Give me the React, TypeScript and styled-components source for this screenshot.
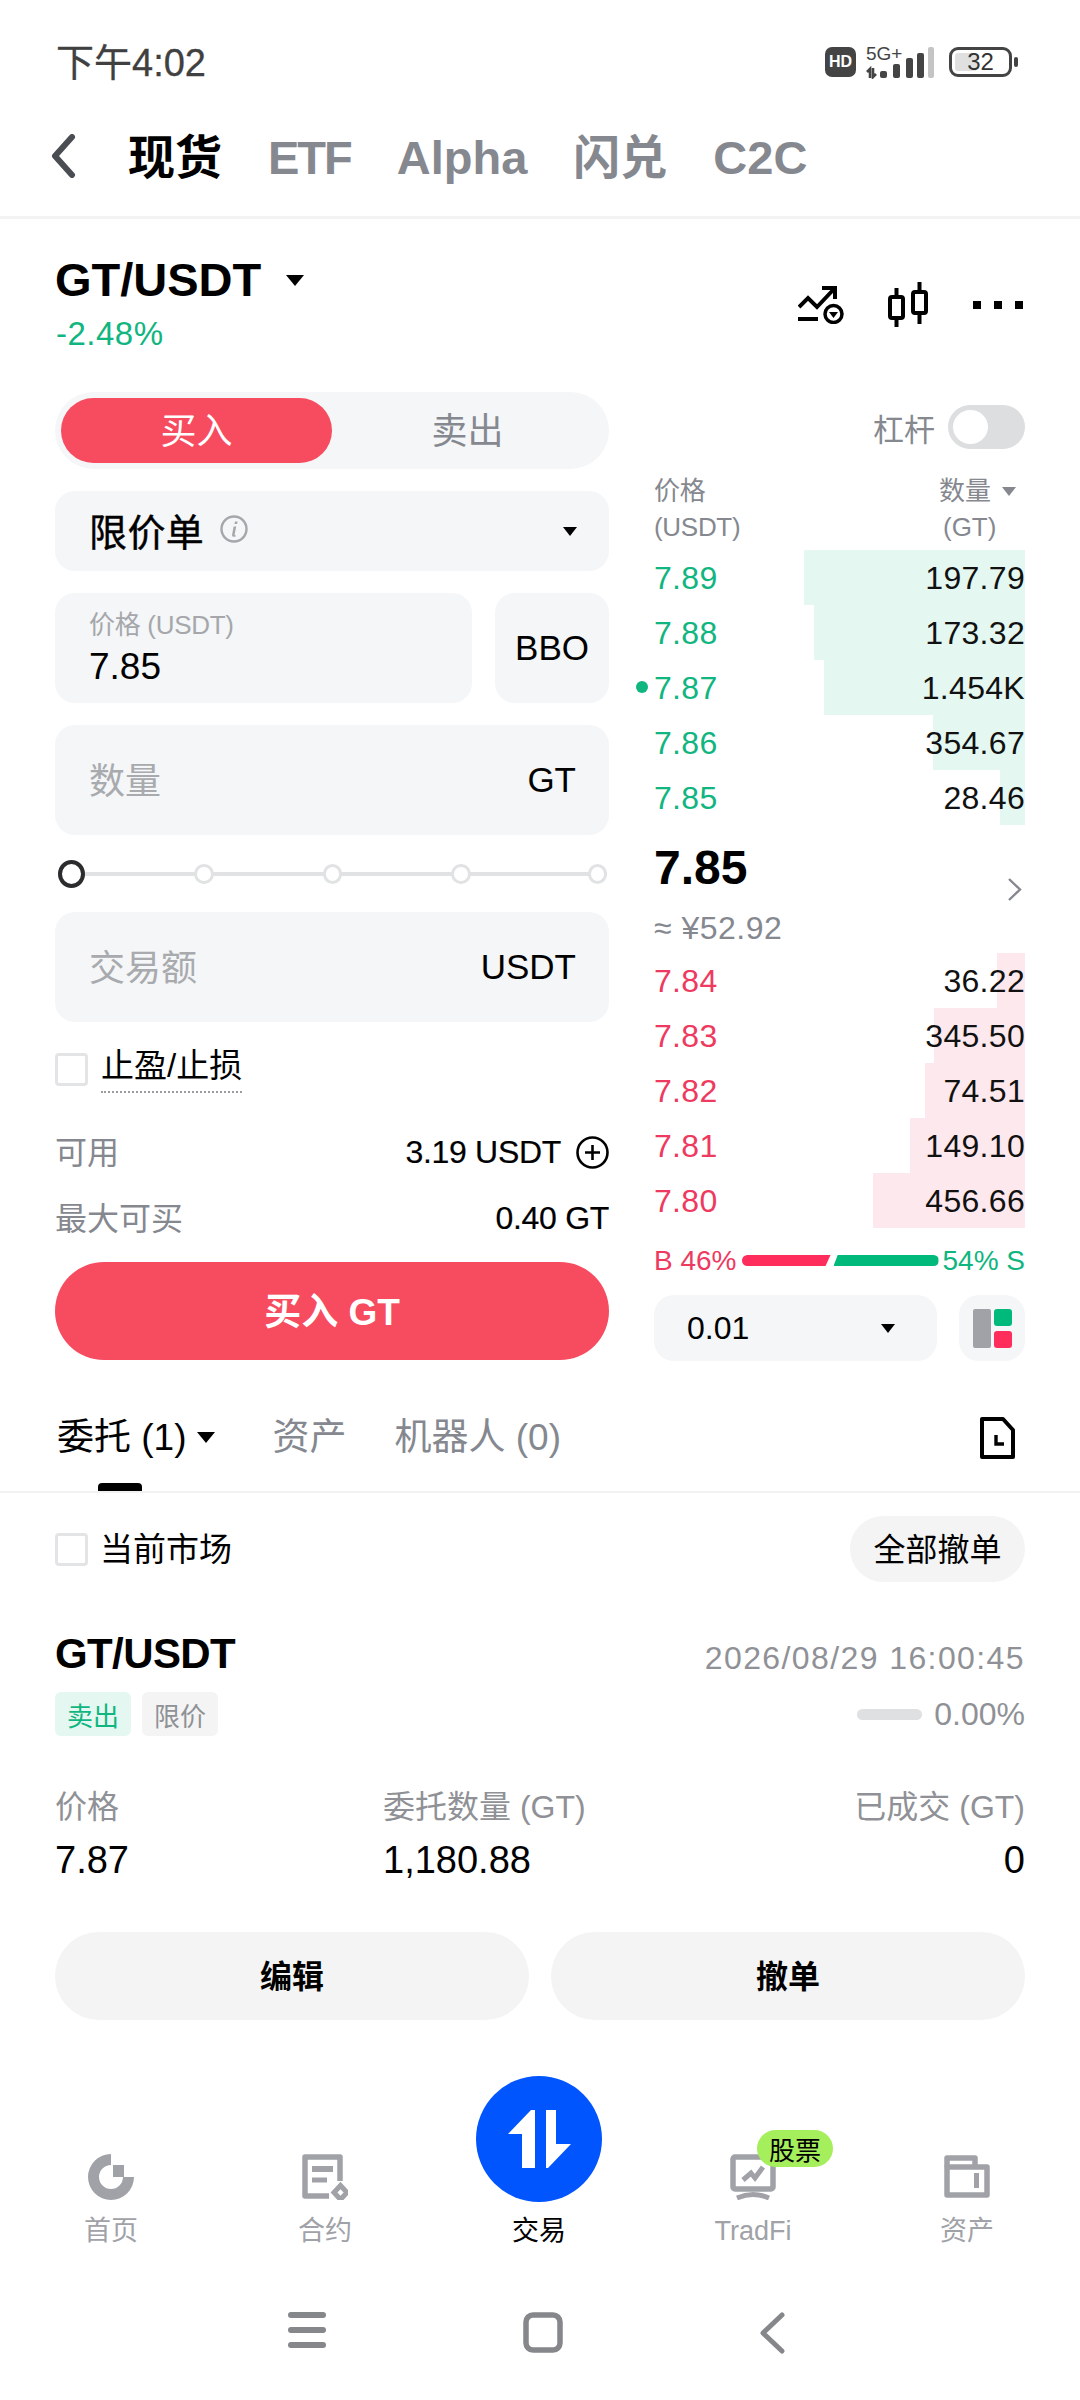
import styled, { createGlobalStyle } from "styled-components";

const GlobalStyle = createGlobalStyle`
  * { box-sizing: border-box; }
  html, body { margin: 0; padding: 0; background: #ffffff; }
  body {
    font-family: "Liberation Sans", "Noto Sans CJK SC", sans-serif;
    color: #000000;
  }
`;

const GREEN = "#10b57f";
const RED = "#ee3a5f";
const GRAY = "#85888f";
const FIELD = "#f4f6f8";

const asks = [
  { price: "7.89", size: "197.79", depth: 221, dot: false },
  { price: "7.88", size: "173.32", depth: 211, dot: false },
  { price: "7.87", size: "1.454K", depth: 201, dot: true },
  { price: "7.86", size: "354.67", depth: 92, dot: false },
  { price: "7.85", size: "28.46", depth: 25, dot: false },
];

const bids = [
  { price: "7.84", size: "36.22", depth: 28 },
  { price: "7.83", size: "345.50", depth: 91 },
  { price: "7.82", size: "74.51", depth: 100 },
  { price: "7.81", size: "149.10", depth: 115 },
  { price: "7.80", size: "456.66", depth: 152 },
];

export default function App() {
  return (
    <Screen>
      <GlobalStyle />
      <StatusBar>
        <Clock>下午4:02</Clock>
        <StatusIcons>
          <HdBadge>HD</HdBadge>
          <NetworkBlock>
            <NetworkLabel>5G+</NetworkLabel>
            <svg width="70" height="32" viewBox="0 0 70 32">
              <path d="M4 31V22L1 25M7 21V30L10 27" fill="none" stroke="#444" strokeWidth="2.6" />
              <rect x="14" y="24" width="7" height="7" rx="2" fill="#444" />
              <rect x="27" y="17" width="7" height="14" rx="2" fill="#444" />
              <rect x="40" y="11" width="7" height="20" rx="2" fill="#444" />
              <rect x="51" y="6" width="7" height="25" rx="2" fill="#444" />
              <rect x="62" y="0" width="6" height="31" rx="2" fill="#c4c4c4" />
            </svg>
          </NetworkBlock>
          <Battery>
            <BatteryFill />
            <BatteryLevel>32</BatteryLevel>
          </Battery>
          <BatteryNub />
        </StatusIcons>
      </StatusBar>

      <TopTabs>
        <BackChevron width="26" height="44" viewBox="0 0 26 44">
          <path d="M22 3L5 22L22 41" fill="none" stroke="#4a4d52" strokeWidth="6" strokeLinecap="round" strokeLinejoin="round" />
        </BackChevron>
        <TopTab $active>现货</TopTab>
        <TopTab $tight>ETF</TopTab>
        <TopTab>Alpha</TopTab>
        <TopTab>闪兑</TopTab>
        <TopTab>C2C</TopTab>
      </TopTabs>

      <MarketHeader>
        <div>
          <PairRow>
            <PairName>GT/USDT</PairName>
            <Triangle $size={9} $color="#000" />
          </PairRow>
          <Change>-2.48%</Change>
        </div>
        <HeaderIcons>
          <svg width="46" height="38" viewBox="0 0 46 38" fill="none" stroke="#000">
            <path d="M1 21L10 12L19 21L36 3" strokeWidth="4" />
            <path d="M24 2H37V13" strokeWidth="4" />
            <path d="M0 33H20" strokeWidth="4" />
            <circle cx="35.5" cy="28" r="8.5" strokeWidth="3.5" />
            <path d="M31 26H40L35.5 32Z" fill="#000" stroke="none" />
          </svg>
          <svg width="40" height="45" viewBox="0 0 40 45" fill="none" stroke="#000" strokeWidth="4">
            <rect x="2" y="15" width="13" height="21" rx="2" />
            <path d="M8.5 6V15M8.5 36V45" />
            <rect x="25" y="10" width="13" height="21" rx="2" />
            <path d="M31.5 0V10M31.5 31V42" />
          </svg>
          <MoreDots>
            <Dot />
            <Dot />
            <Dot />
          </MoreDots>
        </HeaderIcons>
      </MarketHeader>

      <TradeArea>
        <OrderForm>
          <SideToggle>
            <SideOption $active>买入</SideOption>
            <SideOption>卖出</SideOption>
          </SideToggle>

          <OrderType>
            <OrderTypeLabel>
              限价单
              <svg width="28" height="28" viewBox="0 0 28 28">
                <circle cx="14" cy="14" r="12.5" fill="none" stroke="#a5a7ab" strokeWidth="2.4" />
                <path d="M15 6.5h2.6l-.5 2.6h-2.6zM13.6 11.5h2.6l-1.6 8.2c-.1.6.3.8 1.2.6l-.2 1.3c-2.2.6-3.8.2-3.5-1.8z" fill="#a5a7ab" />
              </svg>
            </OrderTypeLabel>
            <Triangle $size={7.5} $color="#000" />
          </OrderType>

          <PriceRow>
            <PriceField>
              <PriceLabel>价格 (USDT)</PriceLabel>
              <PriceValue>7.85</PriceValue>
            </PriceField>
            <BboButton>BBO</BboButton>
          </PriceRow>

          <InputField>
            <Placeholder>数量</Placeholder>
            <Unit>GT</Unit>
          </InputField>

          <Slider>
            <SliderStop $active />
            <SliderStop />
            <SliderStop />
            <SliderStop />
            <SliderStop $last />
          </Slider>

          <InputField $flush>
            <Placeholder>交易额</Placeholder>
            <Unit>USDT</Unit>
          </InputField>

          <StopRow>
            <CheckBox />
            <DottedLabel>止盈/止损</DottedLabel>
          </StopRow>

          <InfoRow>
            <InfoLabel>可用</InfoLabel>
            <InfoValue>
              3.19 USDT
              <svg width="33" height="33" viewBox="0 0 33 33" fill="none" stroke="#000" strokeWidth="2.6">
                <circle cx="16.5" cy="16.5" r="15" />
                <path d="M16.5 9V24M9 16.5H24" />
              </svg>
            </InfoValue>
          </InfoRow>
          <InfoRow>
            <InfoLabel>最大可买</InfoLabel>
            <InfoValue>0.40 GT</InfoValue>
          </InfoRow>

          <BuyButton>买入 GT</BuyButton>
        </OrderForm>

        <OrderBook>
          <LeverageRow>
            <LeverageLabel>杠杆</LeverageLabel>
            <Switch>
              <SwitchKnob />
            </Switch>
          </LeverageRow>

          <BookHeader>
            <BookHeadLeft>
              <span>价格</span>
              <span>(USDT)</span>
            </BookHeadLeft>
            <BookHeadRight>
              <QtyTitle>
                数量
                <Triangle $size={7.5} $color={GRAY} />
              </QtyTitle>
              <QtyUnit>(GT)</QtyUnit>
            </BookHeadRight>
          </BookHeader>

          <div>
            {asks.map((row) => (
              <BookRow key={row.price}>
                <DepthBar $color="#e4f8f1" style={{ width: row.depth }} />
                {row.dot && <OwnOrderDot />}
                <BookPrice $color={GREEN}>{row.price}</BookPrice>
                <BookSize>{row.size}</BookSize>
              </BookRow>
            ))}
          </div>

          <LastPriceBlock>
            <LastPrice>7.85</LastPrice>
            <FiatRow>
              <FiatPrice>≈ ¥52.92</FiatPrice>
              <LastChevron width="15" height="25" viewBox="0 0 15 25">
                <path d="M2 2L13 12.5L2 23" fill="none" stroke="#85888f" strokeWidth="2.4" />
              </LastChevron>
            </FiatRow>
          </LastPriceBlock>

          <div>
            {bids.map((row) => (
              <BookRow key={row.price}>
                <DepthBar $color="#fde9ed" style={{ width: row.depth }} />
                <BookPrice $color={RED}>{row.price}</BookPrice>
                <BookSize>{row.size}</BookSize>
              </BookRow>
            ))}
          </div>

          <RatioRow>
            <RatioText $color={RED}>B 46%</RatioText>
            <RatioBar $color="#ff2d5b" $side="left" />
            <RatioBar $color="#00b97a" $side="right" />
            <RatioText $color={GREEN}>54% S</RatioText>
          </RatioRow>

          <BookControls>
            <PrecisionSelect>
              <span>0.01</span>
              <Triangle $size={7.5} $color="#000" />
            </PrecisionSelect>
            <LayoutButton>
              <svg width="39" height="39" viewBox="0 0 39 39">
                <rect x="0" y="0" width="18" height="39" rx="2" fill="#a0a2a7" />
                <rect x="21" y="0" width="18" height="17" rx="3" fill="#00b97a" />
                <rect x="21" y="22" width="18" height="17" rx="3" fill="#ff2d5b" />
              </svg>
            </LayoutButton>
          </BookControls>
        </OrderBook>
      </TradeArea>

      <OrderTabs>
        <OrderTab $active>
          委托 (1)
          <Triangle $size={9} $color="#000" />
          <TabUnderline />
        </OrderTab>
        <OrderTab>资产</OrderTab>
        <OrderTab>机器人 (0)</OrderTab>
        <HistoryIcon width="35" height="42" viewBox="0 0 35 42" fill="none" stroke="#000" strokeWidth="4">
          <path d="M2 2H23L33 13V40H2Z" strokeLinejoin="round" />
          <path d="M16 18V27H24" strokeWidth="3.4" />
        </HistoryIcon>
      </OrderTabs>

      <FilterRow>
        <FilterLabel>
          <CheckBox />
          <FilterText>当前市场</FilterText>
        </FilterLabel>
        <CancelAll>全部撤单</CancelAll>
      </FilterRow>

      <OrderCard>
        <OrderTop>
          <OrderPair>GT/USDT</OrderPair>
          <OrderTime>2026/08/29 16:00:45</OrderTime>
        </OrderTop>
        <OrderMeta>
          <Tags>
            <Tag $bg="#e4f8f1" $color={GREEN}>卖出</Tag>
            <Tag $bg="#f4f4f4" $color="#8f9196">限价</Tag>
          </Tags>
          <Progress>
            <ProgressBar />
            0.00%
          </Progress>
        </OrderMeta>
        <OrderStats>
          <StatColumn>
            <StatLabel>价格</StatLabel>
            <StatValue>7.87</StatValue>
          </StatColumn>
          <StatColumn>
            <StatLabel>委托数量 (GT)</StatLabel>
            <StatValue>1,180.88</StatValue>
          </StatColumn>
          <StatColumn $right>
            <StatLabel>已成交 (GT)</StatLabel>
            <StatValue>0</StatValue>
          </StatColumn>
        </OrderStats>
        <OrderActions>
          <ActionButton>编辑</ActionButton>
          <ActionButton>撤单</ActionButton>
        </OrderActions>
      </OrderCard>

      <BottomNav>
        <NavItem>
          <svg width="46" height="46" viewBox="0 0 46 46" fill="#a0a2a7">
            <path d="M23 0A23 23 0 1 0 46 23H35A12 12 0 1 1 23 11Z" />
            <rect x="25" y="11" width="11" height="12" />
          </svg>
          <NavLabel>首页</NavLabel>
        </NavItem>
        <NavItem>
          <svg width="46" height="46" viewBox="0 0 46 46" fill="none" stroke="#a0a2a7">
            <path d="M38 27V3H3V42H27" strokeWidth="5.5" strokeLinejoin="round" />
            <path d="M10 15H31" strokeWidth="6" />
            <path d="M10 26H25" strokeWidth="5" />
            <path d="M38.5 31.5L45 38.5L38.5 45.5L32 38.5Z" strokeWidth="5" />
          </svg>
          <NavLabel>合约</NavLabel>
        </NavItem>
        <NavItem>
          <TradeCircle>
            <svg width="64" height="58" viewBox="0 0 64 58" fill="#ffffff">
              <path d="M24 0H28V58H15V24H1Z" strokeLinejoin="round" />
              <path d="M39 0H49V34H64L41 58H39Z" />
            </svg>
          </TradeCircle>
          <NavLabel $active>交易</NavLabel>
        </NavItem>
        <NavItem>
          <NavIconWrap>
            <svg width="46" height="46" viewBox="0 0 46 46" fill="none" stroke="#a0a2a7">
              <rect x="3" y="3" width="40" height="32" rx="2" strokeWidth="5.5" />
              <path d="M13 26L21 19L25 24L33 13" strokeWidth="5" />
              <path d="M7 44Q23 37 39 44" strokeWidth="5" />
            </svg>
            <StockBadge>股票</StockBadge>
          </NavIconWrap>
          <NavLabel>TradFi</NavLabel>
        </NavItem>
        <NavItem>
          <svg width="46" height="46" viewBox="0 0 46 46" fill="none" stroke="#a0a2a7" strokeWidth="5.5">
            <path d="M3 13H43V41H3Z" strokeLinejoin="round" />
            <path d="M3 13V4H31V13" strokeLinejoin="round" />
            <rect x="30" y="19" width="5" height="15" fill="#a0a2a7" stroke="none" />
          </svg>
          <NavLabel>资产</NavLabel>
        </NavItem>
      </BottomNav>

      <SystemBar>
        <svg width="38" height="36" viewBox="0 0 38 36" fill="#85878b">
          <rect x="0" y="0" width="38" height="6" rx="3" />
          <rect x="0" y="15" width="38" height="6" rx="3" />
          <rect x="0" y="30" width="38" height="6" rx="3" />
        </svg>
        <svg width="40" height="41" viewBox="0 0 40 41">
          <rect x="3" y="3" width="34" height="35" rx="7" fill="none" stroke="#85878b" strokeWidth="5.5" />
        </svg>
        <svg width="26" height="42" viewBox="0 0 26 42">
          <path d="M23 3L4 21L23 39" fill="none" stroke="#85878b" strokeWidth="5" strokeLinecap="round" strokeLinejoin="round" />
        </svg>
      </SystemBar>
    </Screen>
  );
}

const Screen = styled.div`
  width: 1080px;
  height: 2400px;
  background: #ffffff;
  overflow: hidden;
  display: flex;
  flex-direction: column;
`;

const StatusBar = styled.div`
  height: 110px;
  padding: 16px 62px 0 56px;
  display: flex;
  align-items: center;
  justify-content: space-between;
  flex-shrink: 0;
`;

const Clock = styled.span`
  font-size: 38px;
  line-height: 44px;
  color: #404040;
  -webkit-text-stroke: 0.3px #404040;
`;

const StatusIcons = styled.div`
  display: flex;
  align-items: center;
  margin-top: -2px;
`;

const HdBadge = styled.div`
  width: 31px;
  height: 30px;
  border-radius: 7px;
  background: #444444;
  color: #ffffff;
  font-size: 16px;
  font-weight: 700;
  display: flex;
  align-items: center;
  justify-content: center;
`;

const NetworkBlock = styled.div`
  width: 70px;
  height: 31px;
  margin-left: 10px;
  position: relative;
  & svg {
    display: block;
  }
`;

const NetworkLabel = styled.span`
  position: absolute;
  left: 0;
  top: -3px;
  font-size: 19px;
  line-height: 20px;
  color: #444444;
`;

const Battery = styled.div`
  width: 63px;
  height: 30px;
  margin-left: 13px;
  border: 3.5px solid #444444;
  border-radius: 9px;
  position: relative;
  display: flex;
  align-items: center;
  justify-content: center;
`;

const BatteryFill = styled.div`
  position: absolute;
  left: 3px;
  top: 3px;
  bottom: 3px;
  width: 22px;
  border-radius: 3px;
  background: #e0e0e0;
`;

const BatteryLevel = styled.span`
  position: relative;
  font-size: 24px;
  line-height: 24px;
  color: #333333;
`;

const BatteryNub = styled.div`
  width: 4px;
  height: 10px;
  margin-left: 2px;
  border-radius: 2px;
  background: #444444;
`;

const TopTabs = styled.div`
  height: 109px;
  padding: 0 0 11px 50px;
  display: flex;
  align-items: center;
  gap: 46px;
  border-bottom: 3px solid #f3f3f4;
  flex-shrink: 0;
`;

const BackChevron = styled.svg`
  margin: -4px 6px 0 0;
`;

const TopTab = styled.span<{ $active?: boolean; $tight?: boolean }>`
  font-size: 47px;
  line-height: 60px;
  font-weight: 700;
  letter-spacing: ${(p) => (p.$tight ? "-2px" : "0")};
  color: ${(p) => (p.$active ? "#000000" : "#85888f")};
`;

const MarketHeader = styled.div`
  height: 173px;
  padding: 31px 57px 0 55px;
  display: flex;
  justify-content: space-between;
  flex-shrink: 0;
`;

const PairRow = styled.div`
  display: flex;
  align-items: center;
  gap: 25px;
  height: 60px;
`;

const PairName = styled.span`
  font-size: 47px;
  line-height: 60px;
  font-weight: 700;
`;

const Triangle = styled.span<{ $size: number; $color: string }>`
  display: inline-block;
  width: 0;
  height: 0;
  border-left: ${(p) => p.$size}px solid transparent;
  border-right: ${(p) => p.$size}px solid transparent;
  border-top: ${(p) => p.$size * 1.3}px solid ${(p) => p.$color};
  flex-shrink: 0;
`;

const Change = styled.div`
  font-size: 33px;
  line-height: 40px;
  letter-spacing: 0.5px;
  color: ${GREEN};
  margin: 4px 0 0 1px;
`;

const HeaderIcons = styled.div`
  display: flex;
  align-items: center;
  gap: 44px;
  height: 45px;
  margin-top: 32px;
`;

const MoreDots = styled.div`
  width: 50px;
  display: flex;
  justify-content: space-between;
  margin-left: 1px;
`;

const Dot = styled.span`
  width: 8px;
  height: 8px;
  background: #000000;
`;

const TradeArea = styled.div`
  height: 969px;
  padding: 0 55px;
  display: grid;
  grid-template-columns: 554px 371px;
  column-gap: 45px;
  flex-shrink: 0;
`;

const OrderForm = styled.div`
  display: flex;
  flex-direction: column;
`;

const SideToggle = styled.div`
  height: 77px;
  padding: 6px;
  border-radius: 39px;
  background: ${FIELD};
  display: grid;
  grid-template-columns: 271px 1fr;
`;

const SideOption = styled.div<{ $active?: boolean }>`
  padding-bottom: 5px;
  border-radius: 33px;
  display: flex;
  align-items: center;
  justify-content: center;
  font-size: 36px;
  background: ${(p) => (p.$active ? "#f74b60" : "transparent")};
  color: ${(p) => (p.$active ? "#ffffff" : "#85888f")};
`;

const OrderType = styled.div`
  height: 80px;
  margin-top: 22px;
  padding: 0 32px 0 34px;
  border-radius: 20px;
  background: ${FIELD};
  display: flex;
  align-items: center;
  justify-content: space-between;
`;

const OrderTypeLabel = styled.div`
  display: flex;
  align-items: center;
  gap: 16px;
  margin-top: -4px;
  font-size: 38px;
  letter-spacing: 0.4px;
  -webkit-text-stroke: 0.4px #000;
`;

const PriceRow = styled.div`
  height: 110px;
  margin-top: 22px;
  display: grid;
  grid-template-columns: 417px 1fr;
  column-gap: 23px;
`;

const PriceField = styled.div`
  border-radius: 20px;
  background: ${FIELD};
  padding: 16px 0 0 34px;
`;

const PriceLabel = styled.div`
  font-size: 26px;
  line-height: 32px;
  letter-spacing: -0.3px;
  color: #a5a7ab;
`;

const PriceValue = styled.div`
  font-size: 37px;
  line-height: 44px;
  margin-top: 4px;
`;

const BboButton = styled.div`
  border-radius: 20px;
  background: ${FIELD};
  display: flex;
  align-items: center;
  justify-content: center;
  font-size: 35px;
`;

const InputField = styled.div<{ $flush?: boolean }>`
  height: 110px;
  margin-top: ${(p) => (p.$flush ? 0 : 22)}px;
  padding: 0 33px 0 34px;
  border-radius: 20px;
  background: ${FIELD};
  display: flex;
  align-items: center;
  justify-content: space-between;
`;

const Placeholder = styled.span`
  margin-top: -5px;
  font-size: 36px;
  color: #a8aaae;
`;

const Unit = styled.span`
  font-size: 35px;
`;

const Slider = styled.div`
  height: 77px;
  padding: 0 2px 0 3px;
  display: flex;
  align-items: center;
  gap: 109px;
  background: linear-gradient(#e0e2e3, #e0e2e3) center / 100% 4px no-repeat;
  background-origin: content-box;
`;

const SliderStop = styled.span<{ $active?: boolean; $last?: boolean }>`
  width: ${(p) => (p.$active ? 28 : 20)}px;
  height: ${(p) => (p.$active ? 28 : 20)}px;
  margin-left: ${(p) => (p.$last ? 8 : 0)}px;
  border-radius: 50%;
  background: #ffffff;
  border: ${(p) => (p.$active ? "4.5px solid #2c2c2e" : "3px solid #e0e2e3")};
`;

const StopRow = styled.div`
  height: 66px;
  margin-top: 31px;
  display: flex;
  gap: 13px;
`;

const CheckBox = styled.span`
  display: block;
  width: 33px;
  height: 33px;
  border: 3px solid #e3e4e6;
  border-radius: 4px;
  background: #ffffff;
  flex-shrink: 0;
`;

const DottedLabel = styled.span`
  height: 46px;
  margin-top: -6px;
  font-size: 33px;
  line-height: 38px;
  border-bottom: 2px dotted #9a9ca0;
`;

const InfoRow = styled.div`
  height: 66px;
  display: flex;
  align-items: center;
  justify-content: space-between;
`;

const InfoLabel = styled.span`
  margin-top: -4px;
  font-size: 32px;
  color: #85888f;
`;

const InfoValue = styled.span`
  display: flex;
  align-items: center;
  gap: 15px;
  font-size: 32px;
  letter-spacing: -0.3px;
  -webkit-text-stroke: 0.2px #000;
`;

const BuyButton = styled.div`
  height: 98px;
  margin-top: 11px;
  padding-bottom: 4px;
  border-radius: 49px;
  background: #f74b60;
  color: #ffffff;
  font-size: 37px;
  font-weight: 700;
  display: flex;
  align-items: center;
  justify-content: center;
`;

const OrderBook = styled.div`
  display: flex;
  flex-direction: column;
  padding-top: 13px;
`;

const LeverageRow = styled.div`
  height: 44px;
  display: flex;
  align-items: center;
  justify-content: flex-end;
  gap: 13px;
`;

const LeverageLabel = styled.span`
  font-size: 31px;
  color: #85888f;
`;

const Switch = styled.div`
  width: 77px;
  height: 44px;
  border-radius: 22px;
  background: #dcdee0;
  padding: 5px;
`;

const SwitchKnob = styled.div`
  width: 35px;
  height: 34px;
  border-radius: 50%;
  background: #ffffff;
`;

const BookHeader = styled.div`
  height: 101px;
  padding-top: 24px;
  display: flex;
  justify-content: space-between;
  font-size: 26px;
  line-height: 36px;
  color: #85888f;
`;

const BookHeadLeft = styled.div`
  display: flex;
  flex-direction: column;
  letter-spacing: -0.3px;
`;

const BookHeadRight = styled.div`
  display: flex;
  flex-direction: column;
  align-items: flex-start;
  padding-right: 9px;
`;

const QtyTitle = styled.div`
  display: flex;
  align-items: center;
  gap: 11px;
`;

const QtyUnit = styled.div`
  padding-left: 4px;
`;

const BookRow = styled.div`
  height: 55px;
  padding-top: 2px;
  position: relative;
  display: flex;
  align-items: center;
  justify-content: space-between;
  font-size: 32px;
  letter-spacing: 0.3px;
`;

const DepthBar = styled.div<{ $color: string }>`
  position: absolute;
  right: 0;
  top: 0;
  bottom: 0;
  background: ${(p) => p.$color};
`;

const OwnOrderDot = styled.span`
  position: absolute;
  left: -18px;
  top: 21px;
  width: 12px;
  height: 12px;
  border-radius: 50%;
  background: ${GREEN};
`;

const BookPrice = styled.span<{ $color: string }>`
  position: relative;
  color: ${(p) => p.$color};
`;

const BookSize = styled.span`
  position: relative;
  color: #111111;
`;

const LastPriceBlock = styled.div`
  height: 128px;
  padding-top: 13px;
`;

const LastPrice = styled.div`
  font-size: 48px;
  line-height: 60px;
  font-weight: 700;
`;

const FiatRow = styled.div`
  display: flex;
  justify-content: space-between;
  font-size: 32px;
  line-height: 40px;
  letter-spacing: 0.5px;
  margin-top: 10px;
  color: #85888f;
`;

const FiatPrice = styled.span``;

const LastChevron = styled.svg`
  margin: -31px 3px 0 0;
`;

const RatioRow = styled.div`
  height: 67px;
  padding-bottom: 2px;
  display: flex;
  align-items: center;
`;

const RatioText = styled.span<{ $color: string }>`
  font-size: 28px;
  white-space: nowrap;
  flex-shrink: 0;
  color: ${(p) => p.$color};
  &:last-child {
    margin-left: auto;
  }
`;

const RatioBar = styled.span<{ $color: string; $side: "left" | "right" }>`
  height: 11px;
  flex: ${(p) => (p.$side === "left" ? "0 0 89px" : "0 0 105px")};
  margin: ${(p) => (p.$side === "left" ? "0 3px 0 5px" : "0")};
  background: ${(p) => p.$color};
  border-radius: ${(p) => (p.$side === "left" ? "6px 0 0 6px" : "0 6px 6px 0")};
  clip-path: ${(p) =>
    p.$side === "left"
      ? "polygon(0 0, 100% 0, 94.4% 100%, 0 100%)"
      : "polygon(4% 0, 100% 0, 100% 100%, 0 100%)"};
`;

const BookControls = styled.div`
  height: 66px;
  display: grid;
  grid-template-columns: 283px 66px;
  column-gap: 22px;
`;

const PrecisionSelect = styled.div`
  border-radius: 20px;
  background: ${FIELD};
  padding: 0 42px 0 33px;
  display: flex;
  align-items: center;
  justify-content: space-between;
  font-size: 32px;
`;

const LayoutButton = styled.div`
  border-radius: 20px;
  background: ${FIELD};
  display: flex;
  align-items: center;
  justify-content: center;
`;

const OrderTabs = styled.div`
  height: 132px;
  padding: 0 65px 0 57px;
  display: flex;
  align-items: flex-start;
  gap: 48px;
  border-bottom: 2px solid #f2f2f3;
  flex-shrink: 0;
`;

const OrderTab = styled.div<{ $active?: boolean }>`
  height: 130px;
  padding-top: 52px;
  margin-right: ${(p) => (p.$active ? 10 : 0)}px;
  position: relative;
  display: flex;
  align-items: flex-start;
  gap: 10px;
  font-size: 37px;
  line-height: 50px;
  color: ${(p) => (p.$active ? "#000000" : "#85888f")};
  & > span:first-of-type {
    margin-top: 19px;
  }
`;

const TabUnderline = styled.i`
  position: absolute;
  left: 41px;
  bottom: 0;
  width: 44px;
  height: 8px;
  border-radius: 4px 4px 0 0;
  background: #000000;
`;

const HistoryIcon = styled.svg`
  margin: 56px 0 0 auto;
`;

const FilterRow = styled.div`
  height: 89px;
  padding: 23px 55px 0 55px;
  display: flex;
  align-items: flex-start;
  justify-content: space-between;
  flex-shrink: 0;
`;

const FilterLabel = styled.div`
  display: flex;
  align-items: center;
  gap: 12px;
  height: 66px;
`;

const FilterText = styled.span`
  margin-top: -5px;
  font-size: 33px;
`;

const CancelAll = styled.div`
  width: 175px;
  height: 66px;
  padding-bottom: 5px;
  border-radius: 33px;
  background: #f4f4f4;
  display: flex;
  align-items: center;
  justify-content: center;
  font-size: 32px;
`;

const OrderCard = styled.div`
  padding: 47px 55px 0 55px;
  display: flex;
  flex-direction: column;
  flex-shrink: 0;
`;

const OrderTop = styled.div`
  height: 50px;
  display: flex;
  align-items: center;
  justify-content: space-between;
`;

const OrderPair = styled.span`
  font-size: 42px;
  font-weight: 700;
  letter-spacing: -0.6px;
`;

const OrderTime = styled.span`
  font-size: 32px;
  letter-spacing: 1.4px;
  color: #8f9196;
  margin-top: 8px;
`;

const OrderMeta = styled.div`
  height: 44px;
  margin-top: 13px;
  display: flex;
  align-items: center;
  justify-content: space-between;
`;

const Tags = styled.div`
  display: flex;
  gap: 11px;
`;

const Tag = styled.span<{ $bg: string; $color: string }>`
  width: 76px;
  height: 44px;
  border-radius: 6px;
  background: ${(p) => p.$bg};
  color: ${(p) => p.$color};
  font-size: 26px;
  display: flex;
  align-items: center;
  justify-content: center;
`;

const Progress = styled.div`
  display: flex;
  align-items: center;
  gap: 12px;
  font-size: 32px;
  color: #8f9196;
`;

const ProgressBar = styled.span`
  width: 65px;
  height: 11px;
  border-radius: 6px;
  background: #dfe0e2;
`;

const OrderStats = styled.div`
  margin-top: 48px;
  display: grid;
  grid-template-columns: 328px 1fr auto;
`;

const StatColumn = styled.div<{ $right?: boolean }>`
  display: flex;
  flex-direction: column;
  align-items: ${(p) => (p.$right ? "flex-end" : "flex-start")};
`;

const StatLabel = styled.span`
  font-size: 32px;
  line-height: 46px;
  color: #8f9196;
`;

const StatValue = styled.span`
  font-size: 38px;
  line-height: 50px;
  margin-top: 5px;
`;

const OrderActions = styled.div`
  margin-top: 47px;
  display: grid;
  grid-template-columns: 1fr 1fr;
  column-gap: 22px;
`;

const ActionButton = styled.div`
  height: 88px;
  padding-bottom: 4px;
  border-radius: 44px;
  background: #f4f4f4;
  display: flex;
  align-items: center;
  justify-content: center;
  font-size: 32px;
  font-weight: 700;
`;

const BottomNav = styled.div`
  height: 180px;
  margin-top: 50px;
  padding-left: 4px;
  display: grid;
  grid-template-columns: repeat(5, 214px);
  align-items: end;
  flex-shrink: 0;
`;

const NavItem = styled.div`
  display: flex;
  flex-direction: column;
  align-items: center;
  gap: 12px;
`;

const NavIconWrap = styled.div`
  position: relative;
  height: 46px;
`;

const NavLabel = styled.span<{ $active?: boolean }>`
  font-size: 27px;
  line-height: 38px;
  color: ${(p) => (p.$active ? "#000000" : "#a0a2a7")};
`;

const TradeCircle = styled.div`
  width: 126px;
  height: 126px;
  margin-bottom: -2px;
  border-radius: 50%;
  background: #0055ff;
  display: flex;
  align-items: center;
  justify-content: center;
`;

const StockBadge = styled.span`
  position: absolute;
  left: 27px;
  top: -24px;
  width: 76px;
  height: 37px;
  border-radius: 19px;
  background: #a5ee5c;
  color: #000000;
  font-size: 26px;
  display: flex;
  align-items: center;
  justify-content: center;
`;

const SystemBar = styled.div`
  flex: 1;
  padding: 62px 295px 0 288px;
  display: flex;
  align-items: flex-start;
  justify-content: space-between;
`;
